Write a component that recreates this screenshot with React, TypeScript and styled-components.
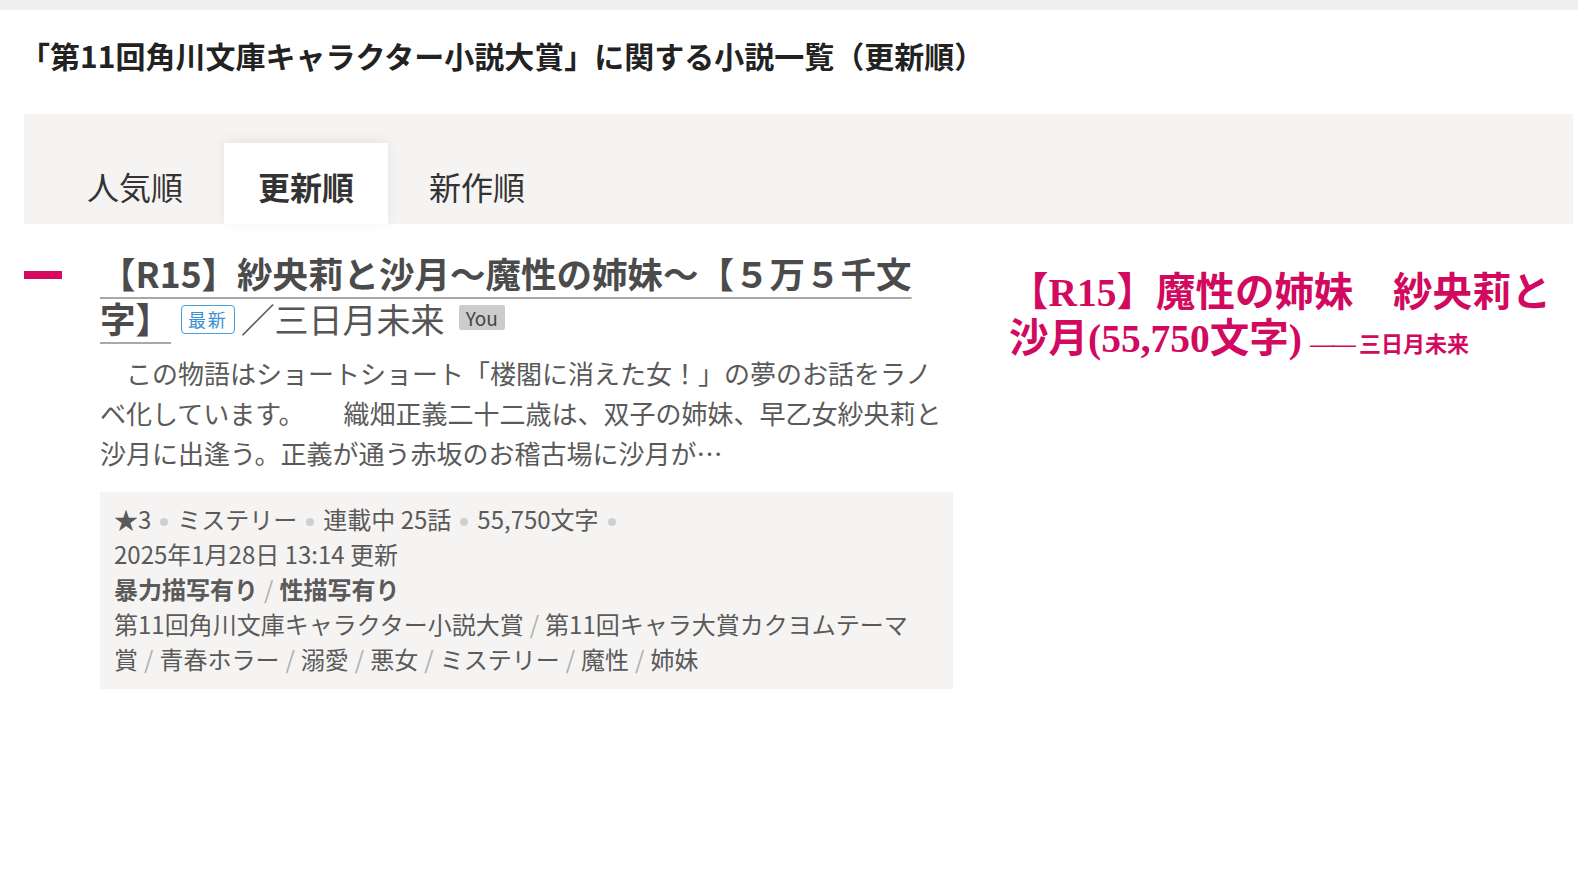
import styled, { createGlobalStyle } from "styled-components";

const GlobalStyle = createGlobalStyle`
  body {
    margin: 0;
    background: #ffffff;
    font-family: "Noto Sans CJK JP", "Noto Sans", sans-serif;
    color: #333;
  }
`;

const TopBar = styled.div`
  height: 10px;
  background: #f0efef;
`;

const PageTitle = styled.h1`
  margin: 0;
  padding: 25px 24px 0 20px;
  font-size: 30px;
  line-height: 40px;
  font-weight: 700;
  color: #222;
`;

const TabPanel = styled.div`
  margin: 39px 5px 0 24px;
  height: 110px;
  box-sizing: border-box;
  background: #f5f4f3;
  padding: 29px 0 0 29px;
  display: flex;
  align-items: flex-end;
  gap: 7px;
`;

const Tab = styled.div<{ $active?: boolean }>`
  height: 81px;
  box-sizing: border-box;
  padding: 4px 34px 0;
  display: flex;
  align-items: center;
  font-size: 32px;
  color: #333;
  font-weight: ${(p) => (p.$active ? 700 : 400)};
  background: ${(p) => (p.$active ? "#ffffff" : "transparent")};
  box-shadow: ${(p) => (p.$active ? "0 -2px 12px rgba(0, 0, 0, 0.07)" : "none")};
`;

const Content = styled.div`
  display: flex;
  margin-top: 26px;
`;

const ItemRow = styled.div`
  display: flex;
  padding-left: 24px;
  width: 929px;
  flex: none;
`;

const Marker = styled.div`
  flex: none;
  width: 38px;
  height: 8px;
  margin: 21px 38px 0 0;
  background: #d70a60;
`;

const ItemBody = styled.div`
  width: 853px;
`;

const ItemTitle = styled.div`
  font-size: 35.5px;
  line-height: 45px;
  color: #4b4b4b;
`;

const TitleLink = styled.span`
  font-weight: 700;
  text-decoration: underline;
  text-decoration-color: #a8a8a8;
  text-decoration-thickness: 2px;
  text-underline-offset: 9px;
`;

const NewBadge = styled.span`
  display: inline-block;
  box-sizing: border-box;
  height: 29px;
  margin: 0 6px 0 10px;
  padding: 0 6px;
  border: 1.5px solid #4a9fd8;
  border-radius: 4px;
  color: #3a8fd0;
  font-size: 18px;
  line-height: 26px;
  letter-spacing: 0.1em;
  vertical-align: 6px;
`;

const Author = styled.span`
  font-size: 34px;
  font-weight: 400;
  color: #555;
`;

const YouBadge = styled.span`
  display: inline-block;
  height: 25px;
  margin-left: 14px;
  padding: 0 7px;
  background: #cccccc;
  border-radius: 2px;
  color: #444;
  font-size: 19px;
  line-height: 25px;
  vertical-align: 7px;
`;

const Description = styled.p`
  margin: 12px 0 0;
  font-size: 26px;
  line-height: 40px;
  color: #5a5a5a;
`;

const MetaBox = styled.div`
  margin-top: 19px;
  padding: 9px 14px 13px;
  background: #f5f4f3;
  font-size: 24px;
  line-height: 35px;
  color: #5a5a5a;
`;

const MetaLine = styled.div<{ $bold?: boolean }>`
  font-weight: ${(p) => (p.$bold ? 700 : 400)};
`;

const Dot = styled.span`
  display: inline-block;
  width: 8px;
  height: 8px;
  margin: 0 9px;
  border-radius: 50%;
  background: #cfcfcf;
  vertical-align: middle;
`;

const Slash = styled.span`
  color: #b0b0b0;
  font-weight: 400;
  margin: 0 6px;
`;

const Side = styled.div`
  padding: 20px 20px 0 56px;
  font-family: "Liberation Serif", "Noto Sans CJK JP", serif;
  font-weight: 700;
  font-size: 39.5px;
  line-height: 46px;
  color: #d10a5f;
`;

const SideAuthor = styled.span`
  font-family: "Noto Sans CJK JP", sans-serif;
  font-size: 22px;
  font-weight: 700;
  margin-left: 8px;
`;

const SideDash = styled.span`
  font-family: "Liberation Sans", sans-serif;
  font-weight: 400;
  font-size: 24px;
  letter-spacing: -2px;
`;

const tags = [
  "第11回角川文庫キャラクター小説大賞",
  "第11回キャラ大賞カクヨムテーマ賞",
  "青春ホラー",
  "溺愛",
  "悪女",
  "ミステリー",
  "魔性",
  "姉妹",
];

const intro =
  "\u3000この物語はショートショート「楼閣に消えた女！」の夢のお話をラノベ化しています。\u3000\u3000織畑正義二十二歳は、双子の姉妹、早乙女紗央莉と沙月に出逢う。正義が通う赤坂のお稽古場に沙月が…";

export default function App() {
  return (
    <>
      <GlobalStyle />
      <TopBar />
      <PageTitle>「第11回角川文庫キャラクター小説大賞」に関する小説一覧（更新順）</PageTitle>
      <TabPanel>
        <Tab>人気順</Tab>
        <Tab $active>更新順</Tab>
        <Tab>新作順</Tab>
      </TabPanel>
      <Content>
        <ItemRow>
          <Marker />
          <ItemBody>
            <ItemTitle>
              <TitleLink>【R15】紗央莉と沙月～魔性の姉妹～【５万５千文字】</TitleLink>
              <NewBadge>最新</NewBadge>
              <Author>／三日月未来</Author>
              <YouBadge>You</YouBadge>
            </ItemTitle>
            <Description>{intro}</Description>
            <MetaBox>
              <MetaLine>
                ★3<Dot />ミステリー<Dot />連載中 25話<Dot />55,750文字<Dot />
              </MetaLine>
              <MetaLine>2025年1月28日 13:14 更新</MetaLine>
              <MetaLine $bold>
                暴力描写有り<Slash>/</Slash>性描写有り
              </MetaLine>
              <MetaLine>
                {tags.map((t, i) => (
                  <span key={t}>
                    {i > 0 && <Slash>/</Slash>}
                    {t}
                  </span>
                ))}
              </MetaLine>
            </MetaBox>
          </ItemBody>
        </ItemRow>
        <Side>
          【R15】魔性の姉妹　紗央莉と沙月(55,750文字)
          <SideAuthor>
            <SideDash>——</SideDash> 三日月未来
          </SideAuthor>
        </Side>
      </Content>
    </>
  );
}
